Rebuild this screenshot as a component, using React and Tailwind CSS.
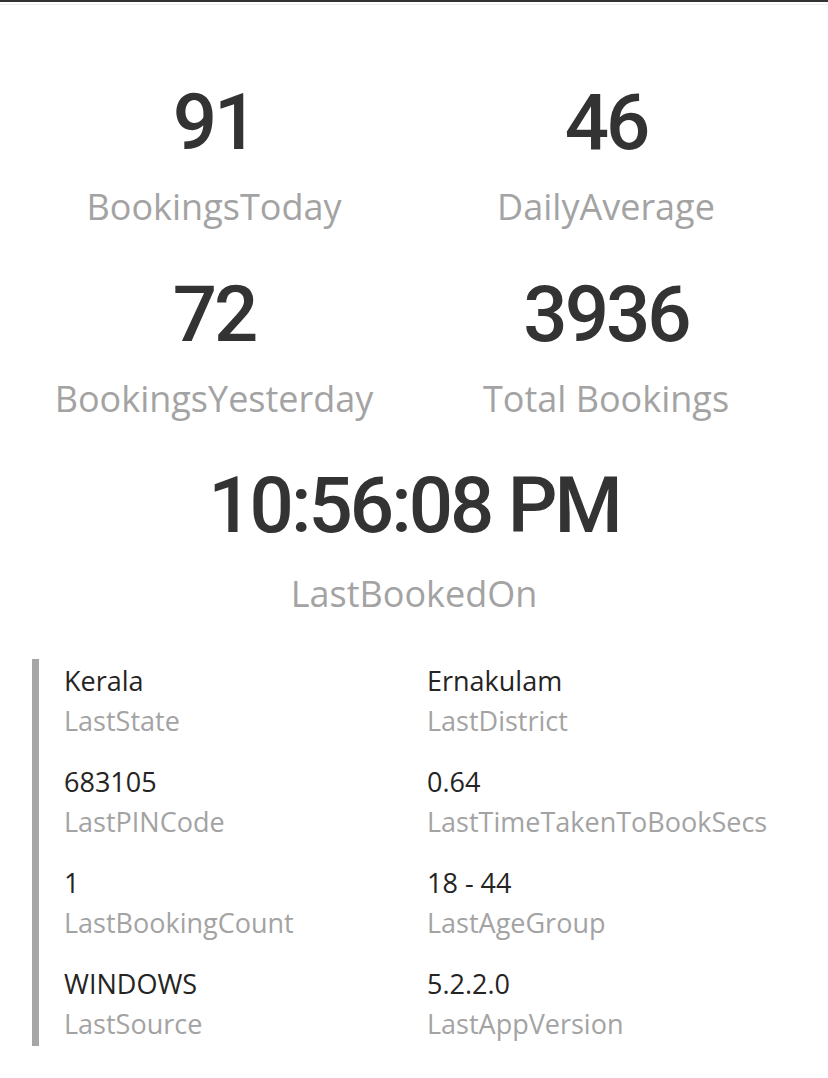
import React from "react";

const NUM = { fontFamily: "Roboto, 'DejaVu Sans', sans-serif" };
const LBL = { fontFamily: "'Open Sans', 'Noto Sans', sans-serif" };

function Kpi({ value, label }) {
  return (
    <div className="flex flex-col items-center">
      <div className="text-[78px] leading-[80px] font-medium text-[#333333] tracking-[-3px]" style={NUM}>
        {value}
      </div>
      <div className="mt-[24px] text-[36px] leading-[40px] text-[#a3a3a3]" style={LBL}>
        {label}
      </div>
    </div>
  );
}

function Field({ value, label }) {
  return (
    <div className="flex flex-col" style={LBL}>
      <div className="text-[27px] leading-[36px] text-[#252423]">{value}</div>
      <div className="mt-1 text-[27px] leading-[36px] text-[#a3a3a3]">{label}</div>
    </div>
  );
}

export default function App() {
  const fields = [
    ["Kerala", "LastState", "Ernakulam", "LastDistrict"],
    ["683105", "LastPINCode", "0.64", "LastTimeTakenToBookSecs"],
    ["1", "LastBookingCount", "18 - 44", "LastAgeGroup"],
    ["WINDOWS", "LastSource", "5.2.2.0", "LastAppVersion"],
  ];
  return (
    <div className="w-[828px] h-[1078px] bg-white border-t-2 border-[#333333] overflow-hidden">
      <div className="h-px bg-[#f0f0f0] mt-[2px]" />
      <div className="mx-[18px] w-[784px] mt-[78px] grid grid-cols-2">
        <Kpi value="91" label="BookingsToday" />
        <Kpi value="46" label="DailyAverage" />
      </div>
      <div className="mx-[18px] w-[784px] mt-[48px] grid grid-cols-2">
        <Kpi value="72" label="BookingsYesterday" />
        <Kpi value="3936" label="Total Bookings" />
      </div>
      <div className="mt-[47px] flex flex-col items-center">
        <div className="text-[78px] leading-[80px] font-medium text-[#333333] tracking-[-3px]" style={NUM}>
          10:56:08 PM
        </div>
        <div className="mt-[28px] text-[36px] leading-[40px] text-[#a3a3a3]" style={LBL}>
          LastBookedOn
        </div>
      </div>
      <div className="ml-[32px] mt-[45px] w-[760px] border-l-[7px] border-[#a6a6a6] pl-[25px] pt-1 pb-1">
        <div className="grid grid-cols-[363px_1fr] gap-y-[25px]">
          {fields.map((r, i) => (
            <React.Fragment key={i}>
              <Field value={r[0]} label={r[1]} />
              <Field value={r[2]} label={r[3]} />
            </React.Fragment>
          ))}
        </div>
      </div>
    </div>
  );
}
